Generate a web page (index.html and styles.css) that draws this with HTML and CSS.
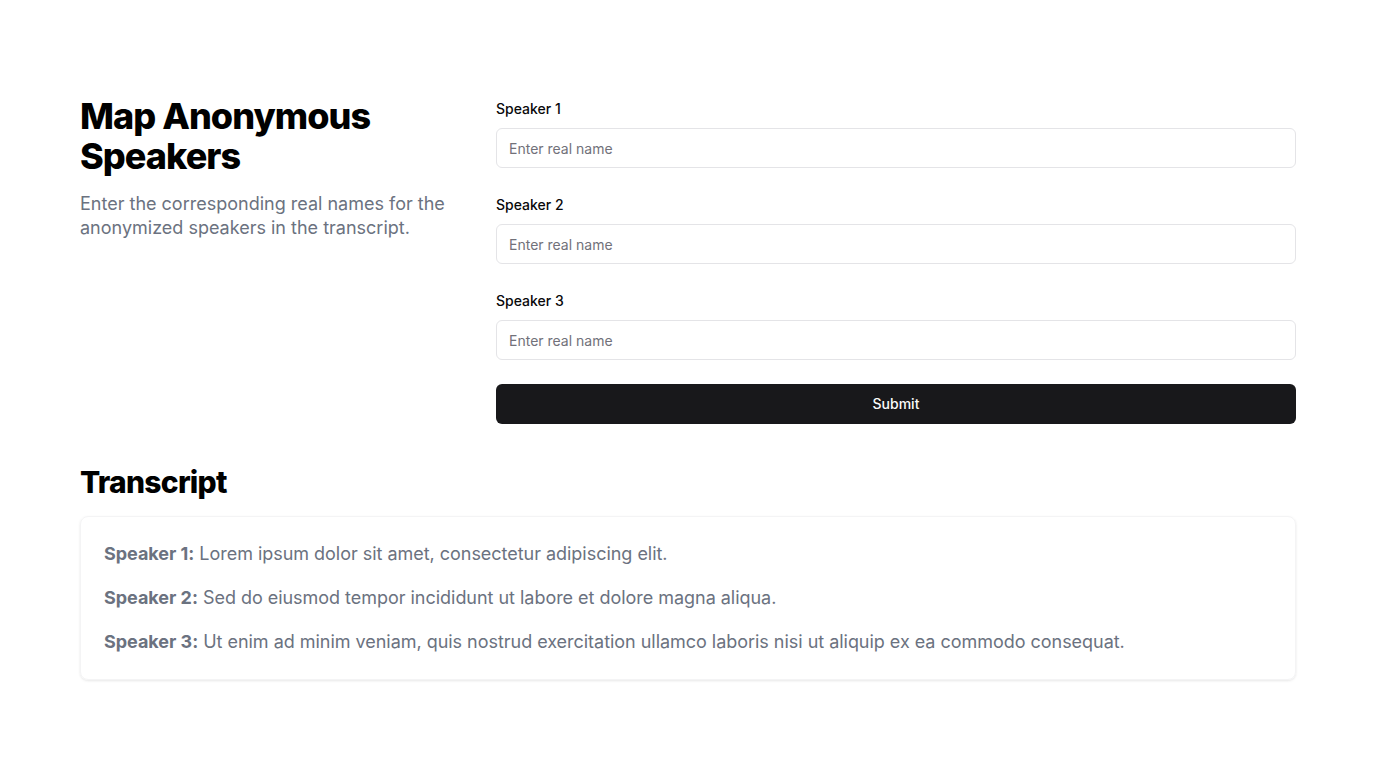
FILE: index.html
```html
<!DOCTYPE html>
<html lang="en">
<head>
<meta charset="utf-8">
<title>Map Anonymous Speakers</title>
<link rel="stylesheet" href="styles.css">
</head>
<body>
<main class="page">
  <section class="top">
    <div class="intro">
      <h1 class="title">Map Anonymous Speakers</h1>
      <p class="lead">Enter the corresponding real names for the anonymized speakers in the transcript.</p>
    </div>
    <form class="form">
      <div class="field">
        <label class="label" for="s1">Speaker 1</label>
        <input class="input" id="s1" type="text" placeholder="Enter real name">
      </div>
      <div class="field">
        <label class="label" for="s2">Speaker 2</label>
        <input class="input" id="s2" type="text" placeholder="Enter real name">
      </div>
      <div class="field">
        <label class="label" for="s3">Speaker 3</label>
        <input class="input" id="s3" type="text" placeholder="Enter real name">
      </div>
      <button class="button" type="button">Submit</button>
    </form>
  </section>
  <section class="transcript">
    <h2 class="subtitle">Transcript</h2>
    <div class="card">
      <p class="line"><strong>Speaker 1:</strong> Lorem ipsum dolor sit amet, consectetur adipiscing elit.</p>
      <p class="line"><strong>Speaker 2:</strong> Sed do eiusmod tempor incididunt ut labore et dolore magna aliqua.</p>
      <p class="line"><strong>Speaker 3:</strong> Ut enim ad minim veniam, quis nostrud exercitation ullamco laboris nisi ut aliquip ex ea commodo consequat.</p>
    </div>
  </section>
</main>
</body>
</html>
```

FILE: styles.css
```css
* { box-sizing: border-box; }
html, body { margin: 0; padding: 0; background: #ffffff; }
body {
  font-family: Inter, "Noto Sans", "Liberation Sans", sans-serif;
  color: #09090b;
}
.page {
  padding: 96px 80px;
}
.top {
  display: grid;
  grid-template-columns: 384px 1fr;
  gap: 32px;
}
.title {
  margin: 0;
  font-size: 36px;
  line-height: 40px;
  font-weight: 800;
  letter-spacing: -0.95px;
  color: #000;
}
.lead {
  margin: 16px 0 0;
  font-size: 18px;
  line-height: 24px;
  color: #6b7280;
}
.form {
  display: flex;
  flex-direction: column;
  gap: 24px;
}
.field {
  display: flex;
  flex-direction: column;
  gap: 7px;
}
.label {
  padding-top: 1px;
  font-size: 14px;
  line-height: 24px;
  font-weight: 500;
  color: #09090b;
}
.input {
  height: 40px;
  width: 100%;
  border: 1px solid #e4e4e7;
  border-radius: 6px;
  padding: 0 12px;
  font-family: inherit;
  font-size: 14px;
  color: #09090b;
  background: #fff;
  outline: none;
}
.input::placeholder { color: #71717a; }
.button {
  height: 40px;
  width: 100%;
  border: 0;
  border-radius: 6px;
  padding: 0 0 2px;
  background: #18181b;
  color: #fafafa;
  font-family: inherit;
  font-size: 14px;
  font-weight: 500;
}
.transcript {
  margin-top: 40px;
}
.subtitle {
  margin: 0 0 16px;
  font-size: 30px;
  line-height: 36px;
  font-weight: 800;
  letter-spacing: -0.75px;
  color: #000;
}
.card {
  border: 1px solid #f4f4f5;
  border-radius: 8px;
  box-shadow: 0 1px 3px rgba(0,0,0,0.07), 0 1px 2px rgba(0,0,0,0.03);
  padding: 23px;
  display: flex;
  flex-direction: column;
  gap: 16px;
}
.line {
  margin: 0;
  font-size: 18px;
  line-height: 28px;
  letter-spacing: -0.03px;
  color: #6b7280;
}
.line strong { font-weight: 700; }
```
